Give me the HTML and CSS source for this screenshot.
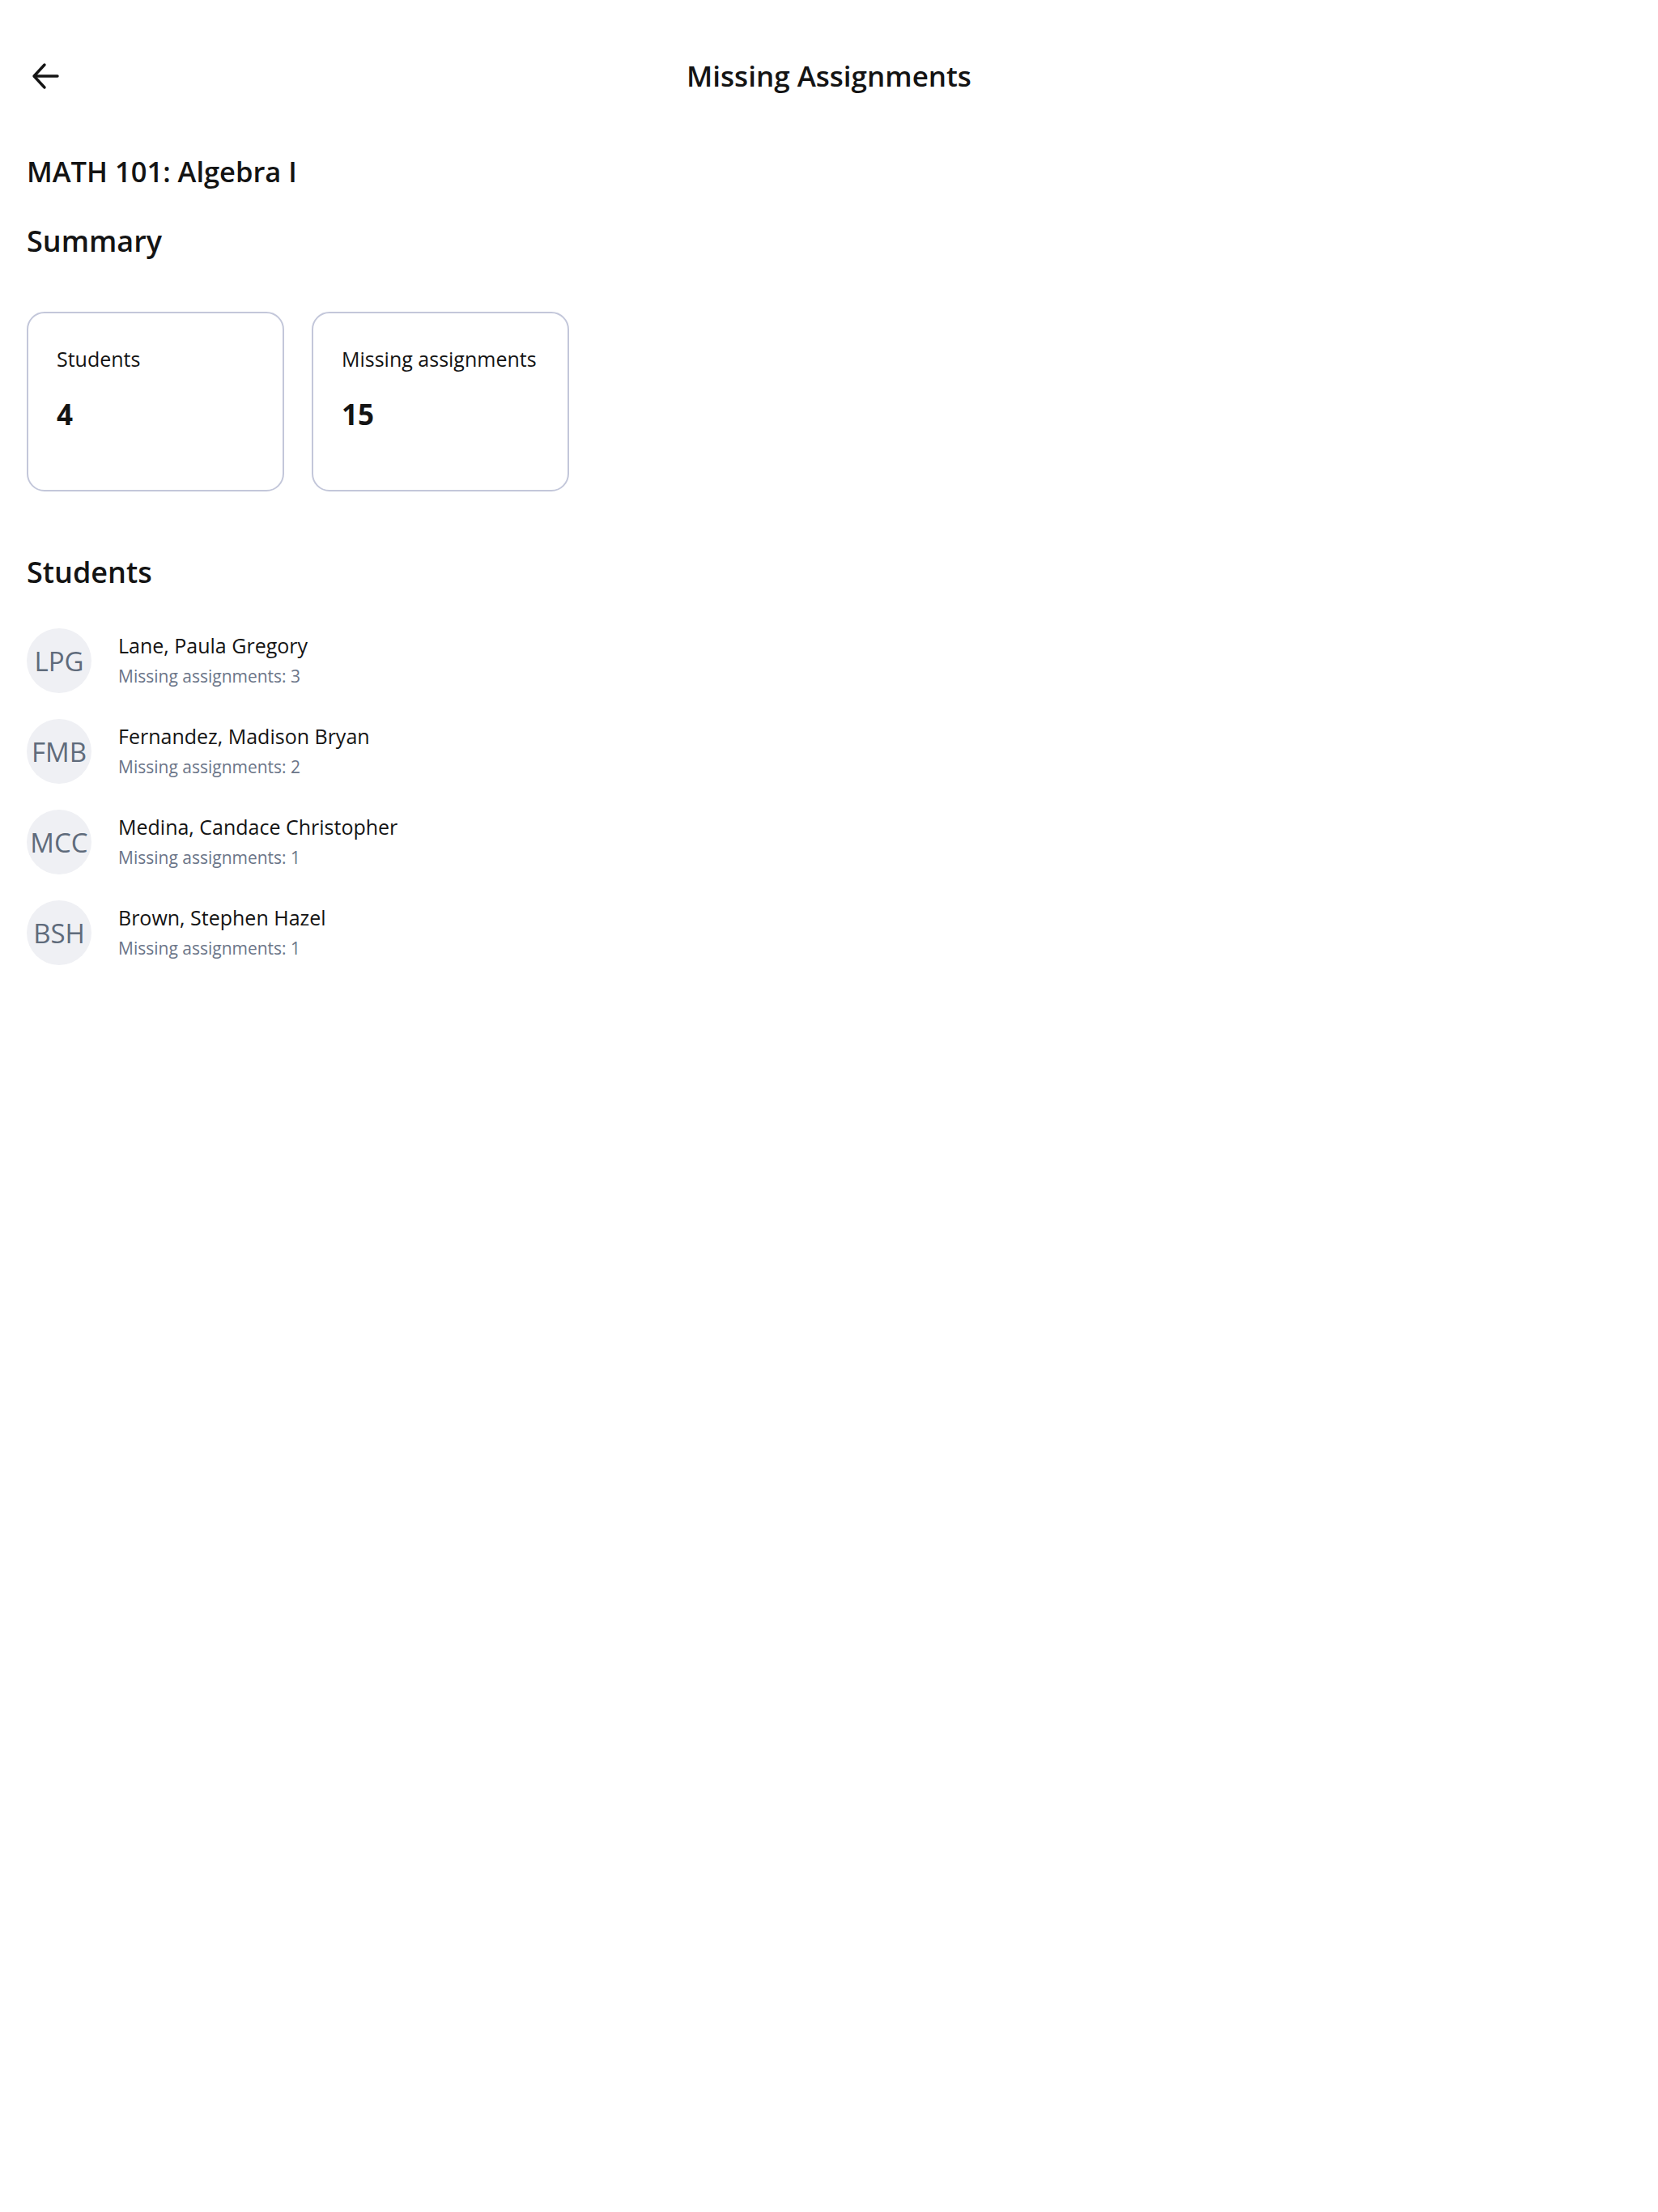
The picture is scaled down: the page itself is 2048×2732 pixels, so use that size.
FILE: index.html
```html
<!DOCTYPE html>
<html lang="en">
<head>
    <meta charset="UTF-8">
    <meta name="viewport" content="width=device-width, initial-scale=1.0">
    <title>Missing Assignments</title>
    <link rel="stylesheet" href="styles.css">
</head>
<body>

<header class="topbar">
    <button class="back-button" aria-label="Back">
        <svg width="36" height="36" viewBox="0 0 36 36" fill="none" stroke="currentColor" stroke-width="3.4" stroke-linecap="round" stroke-linejoin="round">
            <path d="M33 18H5"/>
            <path d="M17 4L4 18l13 14"/>
        </svg>
    </button>
    <h1 class="page-title">Missing Assignments</h1>
    <div></div>
</header>

<main class="content">
    <h2 class="course-name">MATH 101: Algebra I</h2>

    <h2 class="section-title">Summary</h2>
    <!-- Totals for the course -->
    <div class="summary">
        <div class="summary-card">
            <div class="summary-label">Students</div>
            <div class="summary-value">4</div>
        </div>
        <div class="summary-card">
            <div class="summary-label">Missing assignments</div>
            <div class="summary-value">15</div>
        </div>
    </div>

    <h2 class="section-title students-title">Students</h2>
    <ul class="student-list">
        <li class="student">
            <div class="avatar">LPG</div>
            <div class="student-info">
                <div class="student-name">Lane, Paula Gregory</div>
                <div class="student-missing">Missing assignments: 3</div>
            </div>
        </li>
        <li class="student">
            <div class="avatar">FMB</div>
            <div class="student-info">
                <div class="student-name">Fernandez, Madison Bryan</div>
                <div class="student-missing">Missing assignments: 2</div>
            </div>
        </li>
        <li class="student">
            <div class="avatar">MCC</div>
            <div class="student-info">
                <div class="student-name">Medina, Candace Christopher</div>
                <div class="student-missing">Missing assignments: 1</div>
            </div>
        </li>
        <li class="student">
            <div class="avatar">BSH</div>
            <div class="student-info">
                <div class="student-name">Brown, Stephen Hazel</div>
                <div class="student-missing">Missing assignments: 1</div>
            </div>
        </li>
    </ul>
</main>

</body>
</html>
```

FILE: styles.css
```css
body {
    margin: 0;
    padding: 0;
    background-color: #ffffff;
    color: #141414;
    font-family: "Open Sans", "Noto Sans", sans-serif;
}

/* Top bar: back arrow on the left, title centered */
.topbar {
    display: grid;
    grid-template-columns: 1fr auto 1fr;
    align-items: center;
    height: 96px;
    padding-top: 46px;
}

.back-button {
    justify-self: start;
    margin-left: 38px;
    padding: 0;
    width: 36px;
    height: 36px;
    border: none;
    background: none;
    color: #141414;
    cursor: pointer;
}

.back-button svg {
    display: block;
}

.page-title {
    margin: 0;
    font-size: 35px;
    font-weight: 600;
    line-height: 44px;
}

.content {
    padding: 0 33px;
}

.course-name {
    margin: 48px 0 0;
    font-size: 34.5px;
    font-weight: 600;
    line-height: 44px;
}

.section-title {
    margin: 42px 0 0;
    font-size: 36px;
    font-weight: 600;
    line-height: 44px;
}

/* Summary cards */
.summary {
    display: flex;
    gap: 34px;
    margin-top: 65px;
}

.summary-card {
    box-sizing: border-box;
    width: 318px;
    height: 222px;
    padding: 40px 35px 0;
    border: 2px solid #c3c7da;
    border-radius: 22px;
}

.summary-label {
    font-size: 25px;
    line-height: 32px;
}

.summary-value {
    margin-top: 32px;
    font-size: 35px;
    font-weight: 700;
    line-height: 42px;
}

.students-title {
    margin-top: 78px;
}

/* Student rows */
.student-list {
    list-style: none;
    margin: 47px 0 0;
    padding: 0;
    display: flex;
    flex-direction: column;
    gap: 32px;
}

.student {
    display: flex;
    align-items: center;
    gap: 33px;
}

.avatar {
    width: 80px;
    height: 80px;
    border-radius: 50%;
    background-color: #eff0f4;
    color: #5f6b7b;
    font-size: 33px;
    display: flex;
    align-items: center;
    justify-content: center;
    flex-shrink: 0;
}

.student-info {
    display: flex;
    flex-direction: column;
    gap: 10px;
    padding-bottom: 2px;
}

.student-name {
    font-size: 25px;
    line-height: 30px;
}

.student-missing {
    font-size: 21px;
    line-height: 26px;
    color: #6b7588;
}
```
